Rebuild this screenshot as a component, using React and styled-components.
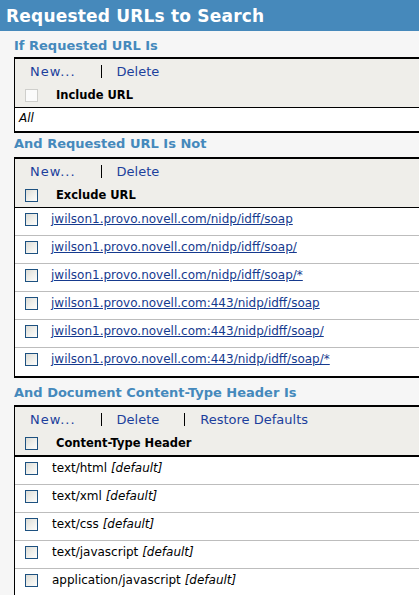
import React from "react";
import styled, { createGlobalStyle } from "styled-components";

const GlobalStyle = createGlobalStyle`
  html, body {
    margin: 0;
    padding: 0;
    background: #f6f6f6;
    font-family: "DejaVu Sans", Verdana, sans-serif;
  }
`;

const excludeUrls = [
  "jwilson1.provo.novell.com/nidp/idff/soap",
  "jwilson1.provo.novell.com/nidp/idff/soap/",
  "jwilson1.provo.novell.com/nidp/idff/soap/*",
  "jwilson1.provo.novell.com:443/nidp/idff/soap",
  "jwilson1.provo.novell.com:443/nidp/idff/soap/",
  "jwilson1.provo.novell.com:443/nidp/idff/soap/*",
];

const contentTypes = [
  "text/html",
  "text/xml",
  "text/css",
  "text/javascript",
  "application/javascript",
];

function Toolbar({ actions }) {
  return (
    <ToolBar>
      {actions.map((a, i) => (
        <React.Fragment key={a}>
          {i > 0 && <Sep />}
          <Action href="#" $wide={a === "New..."}>
            {a}
          </Action>
        </React.Fragment>
      ))}
    </ToolBar>
  );
}

function App() {
  return (
    <Page>
      <GlobalStyle />
      <Header>Requested URLs to Search</Header>

      <SectionTitle $top={6} $bottom={2}>If Requested URL Is</SectionTitle>
      <Box>
        <Toolbar actions={["New...", "Delete"]} />
        <HeadRow>
          <Check $disabled />
          <HeadLabel>Include URL</HeadLabel>
        </HeadRow>
        <AllRow>All</AllRow>
      </Box>

      <SectionTitle $top={2} $bottom={4}>And Requested URL Is Not</SectionTitle>
      <Box>
        <Toolbar actions={["New...", "Delete"]} />
        <HeadRow>
          <Check />
          <HeadLabel>Exclude URL</HeadLabel>
        </HeadRow>
        {excludeUrls.map((u) => (
          <Row key={u}>
            <Check />
            <UrlLink href="#">{u}</UrlLink>
          </Row>
        ))}
      </Box>

      <SectionTitle $top={6} $bottom={3}>And Document Content-Type Header Is</SectionTitle>
      <Box $open>
        <Toolbar actions={["New...", "Delete", "Restore Defaults"]} />
        <HeadRow $thick>
          <Check />
          <HeadLabel>Content-Type Header</HeadLabel>
        </HeadRow>
        {contentTypes.map((t) => (
          <Row key={t}>
            <Check />
            <RowText>
              {t} <em>[default]</em>
            </RowText>
          </Row>
        ))}
      </Box>
    </Page>
  );
}

export default App;

const Page = styled.div`
  width: 419px;
  height: 595px;
  overflow: hidden;
  background: #f6f6f6;
`;

const Header = styled.div`
  height: 31px;
  background: #4689bb;
  color: #fff;
  font-size: 17px;
  font-weight: 700;
  letter-spacing: 0.2px;
  line-height: 33px;
  padding-left: 6px;
  white-space: nowrap;
`;

const SectionTitle = styled.div`
  padding: ${(p) => p.$top}px 0 ${(p) => p.$bottom}px 14px;
  line-height: 18px;
  font-size: 13px;
  font-weight: 700;
  color: #4589bc;
  white-space: nowrap;
`;

const Box = styled.div`
  margin-left: 14px;
  margin-right: -20px;
  border: 1px solid #000;
  border-top-width: 2px;
  border-bottom-width: ${(p) => (p.$open ? 0 : 2)}px;
  background: #fff;
`;

const ToolBar = styled.div`
  height: 24px;
  display: flex;
  align-items: center;
  padding-left: 15px;
  background: #efeeea;
  font-size: 13px;
  white-space: nowrap;
`;

const Action = styled.a`
  color: #1c3f9c;
  text-decoration: none;
  letter-spacing: ${(p) => (p.$wide ? "1px" : "0")};
`;

const Sep = styled.span`
  display: inline-block;
  width: 1px;
  height: 13px;
  background: #000;
  margin: 1px 15px 0 25px;
`;

const HeadRow = styled.div`
  height: 24px;
  display: flex;
  align-items: center;
  padding-left: 10px;
  background: #efeeea;
  border-bottom: ${(p) => (p.$thick ? 2 : 1)}px solid #000;
`;

const HeadLabel = styled.span`
  margin-left: 18px;
  font-size: 11.5px;
  font-weight: 700;
  color: #000;
  white-space: nowrap;
`;

const Check = styled.span`
  display: inline-block;
  flex: none;
  width: 11px;
  height: 11px;
  border: 1px solid ${(p) => (p.$disabled ? "#cfcfcc" : "#1d5180")};
  background: ${(p) =>
    p.$disabled
      ? "#fbfbfb"
      : "linear-gradient(135deg, #dcdcd6 0%, #f0f0ec 55%, #fdfdfc 100%)"};
`;

const AllRow = styled.div`
  height: 23px;
  line-height: 21px;
  padding-left: 4px;
  font-size: 12px;
  font-style: italic;
  color: #000;
`;

const Row = styled.div`
  height: 28px;
  display: flex;
  align-items: flex-start;
  padding: 5px 0 0 10px;
  box-sizing: border-box;
  border-bottom: 1px solid #bdbdbd;
  &:last-child {
    border-bottom: none;
  }
`;

const UrlLink = styled.a`
  margin-left: 13px;
  margin-top: -1px;
  font-size: 12px;
  color: #163a8e;
  text-decoration: underline;
  white-space: nowrap;
`;

const RowText = styled.span`
  margin-left: 14px;
  margin-top: -1px;
  font-size: 12px;
  color: #000;
  white-space: nowrap;
  em {
    font-style: italic;
  }
`;
